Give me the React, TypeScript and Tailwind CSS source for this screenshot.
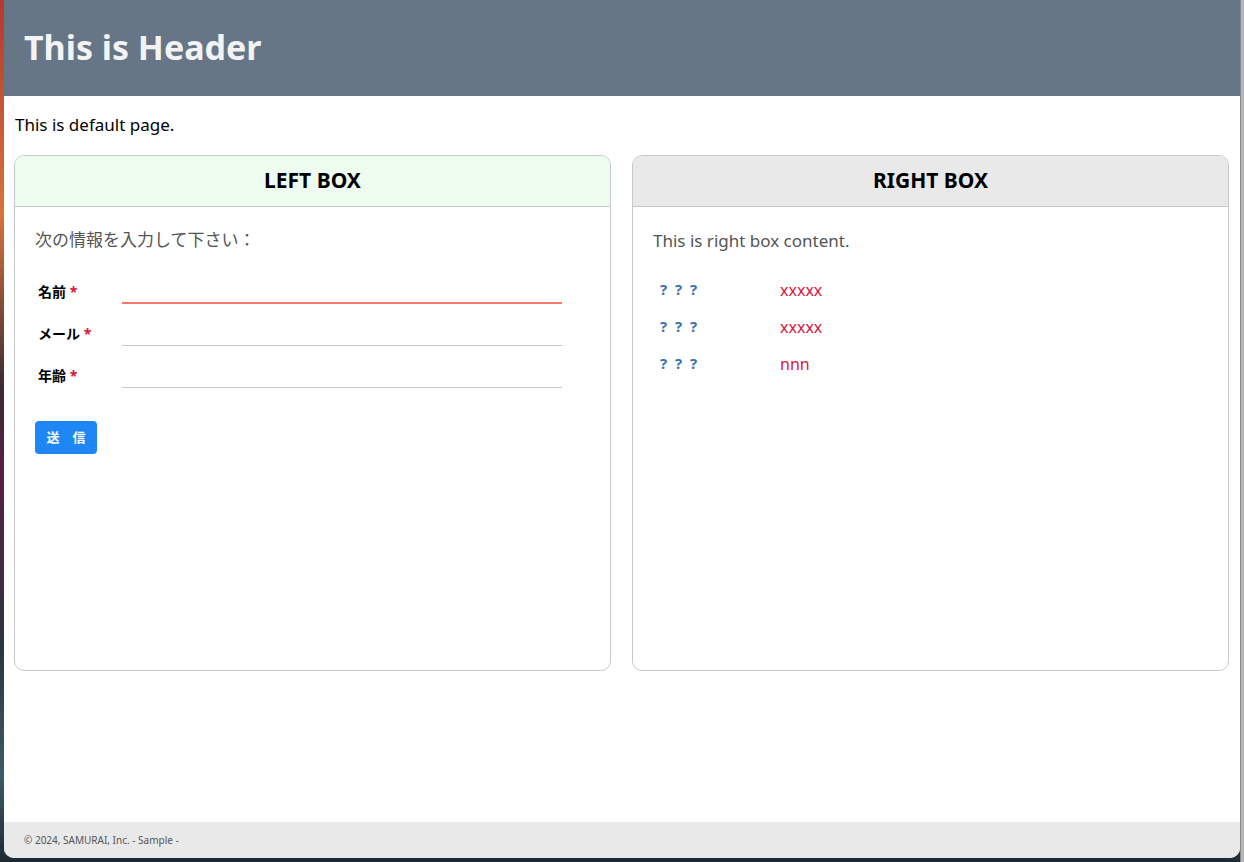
import React from "react";

const latin = { fontFamily: '"Noto Sans", "Noto Sans CJK JP", sans-serif' };

export default function App() {
  return (
    <div
      className="w-[1244px] h-[862px] flex overflow-hidden"
      style={{ ...latin, background: "linear-gradient(180deg,#b23a2e 0%,#d9733a 25%,#3a2a35 45%,#5a2040 55%,#2b3540 75%,#3d5a6a 90%,#1d2a33 100%)" }}
    >
      <div className="w-[4px] shrink-0" />
      <div className="flex-1 flex flex-col bg-white rounded-b-[10px] mb-[4px] overflow-hidden">
        <header className="h-[96px] shrink-0 bg-[#667686] flex items-center pl-[20px]">
          <h1 className="text-[34px] font-bold text-[#f3f3f3] leading-none mt-[-2px]">This is Header</h1>
        </header>
        <main className="flex-1 pl-[10px] pr-[11px] pt-[17px]">
          <p className="text-[17px] leading-[24px] text-black pl-[1px]">This is default page.</p>
          <div className="grid grid-cols-2 gap-[21px] mt-[18px]">
            <section className="h-[516px] border border-[#c8c8c8] rounded-[10px] overflow-hidden flex flex-col">
              <div className="h-[51px] shrink-0 bg-[#edfcee] border-b border-[#c8c8c8] flex items-center justify-center">
                <h2 className="text-[21px] font-bold text-black">LEFT BOX</h2>
              </div>
              <div className="px-[20px] pt-[20px]">
                <p className="text-[17px] leading-[26px] text-[#555]">次の情報を入力して下さい：</p>
                <div className="mt-[25px] flex flex-col gap-[16px]">
                  {[
                    { l: "名前", first: true },
                    { l: "メール", first: false },
                    { l: "年齢", first: false },
                  ].map((r) => (
                    <div key={r.l} className="flex items-center h-[26px]">
                      <label className="w-[87px] pl-[3px] text-[14px] font-bold text-black">
                        {r.l} <span className="text-[#dc143c]">*</span>
                      </label>
                      <div
                        className={
                          r.first
                            ? "w-[440px] h-[26px] border-b-2 border-[#f87a6c]"
                            : "w-[440px] h-[26px] border-b border-[#c8c8c8]"
                        }
                      />
                    </div>
                  ))}
                </div>
                <button className="mt-[33px] w-[62px] h-[33px] rounded-[4px] bg-[#1e87f5] text-white text-[13px] font-bold flex items-center justify-center">
                  送　信
                </button>
              </div>
            </section>
            <section className="h-[516px] border border-[#c8c8c8] rounded-[10px] overflow-hidden flex flex-col">
              <div className="h-[51px] shrink-0 bg-[#e9e9e9] border-b border-[#c8c8c8] flex items-center justify-center">
                <h2 className="text-[21px] font-bold text-black">RIGHT BOX</h2>
              </div>
              <div className="px-[20px] pt-[21px]">
                <p className="text-[17px] leading-[26px] text-[#555]">This is right box content.</p>
                <table className="mt-[17px]">
                  <tbody>
                    {["xxxxx", "xxxxx", "nnn"].map((v, i) => (
                      <tr key={i} className="h-[37px]">
                        <td className="w-[120px] pl-[7px] text-[15px] font-bold text-[#3a74ad] tracking-[2px]">? ? ?</td>
                        <td className="pl-[7px] text-[16px] text-[#dc143c]">{v}</td>
                      </tr>
                    ))}
                  </tbody>
                </table>
              </div>
            </section>
          </div>
        </main>
        <footer className="h-[36px] shrink-0 bg-[#e9e9e9] flex items-center pl-[20px]">
          <span className="text-[10px] text-[#555]">© 2024, SAMURAI, Inc. - Sample -</span>
        </footer>
      </div>
      <div className="w-[4px] shrink-0 bg-[#b5b5b5] border-l border-[#8a8a8a]" />
    </div>
  );
}
